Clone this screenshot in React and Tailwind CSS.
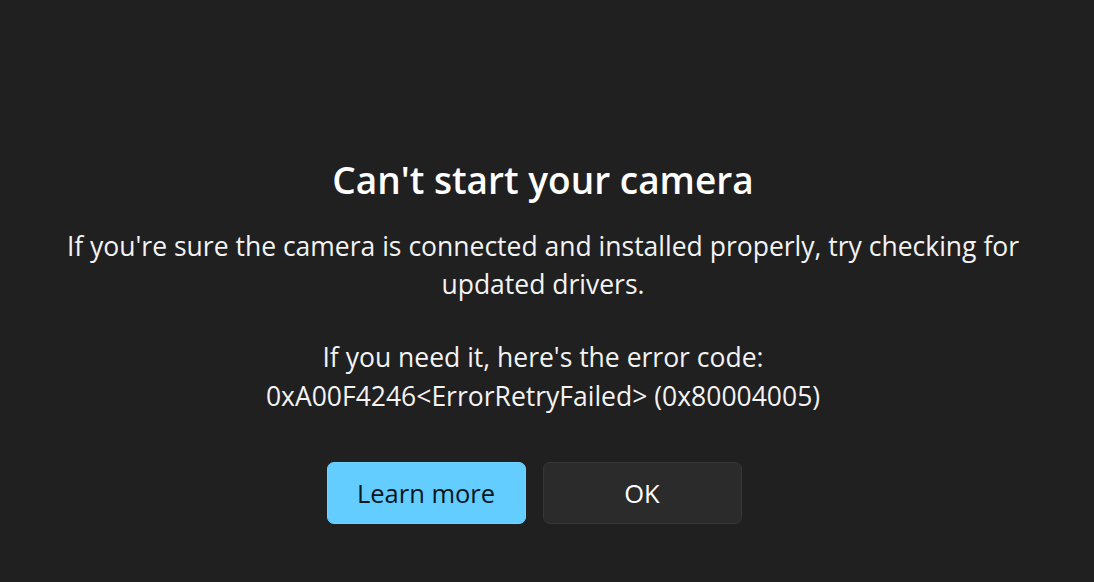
export default function App() {
  return (
    <div
      className="w-[1094px] h-[582px] bg-[#202020] text-white flex flex-col items-center overflow-hidden pr-[8px]"
      style={{ fontFamily: '"Segoe UI", "Open Sans", "Noto Sans", sans-serif' }}
    >
      <h1 className="mt-[156px] text-[37px] leading-[48px] font-semibold text-white whitespace-nowrap">
        Can't start your camera
      </h1>
      <p className="mt-[23px] text-[26.5px] leading-[38px] text-center text-[#f3f3f3] whitespace-nowrap">
        If you're sure the camera is connected and installed properly, try checking for
        <br />
        updated drivers.
      </p>
      <p className="mt-[35px] text-[26.5px] leading-[39px] text-center text-[#f3f3f3] whitespace-nowrap">
        If you need it, here's the error code:
        <br />
        0xA00F4246&lt;ErrorRetryFailed&gt; (0x80004005)
      </p>
      <div className="mt-[46px] mr-[18px] flex gap-[17px]">
        <button className="w-[199px] h-[62px] rounded-[7px] bg-[#62cdfe] text-[#08161f] text-[25.5px] border border-[#70d3ff]">
          Learn more
        </button>
        <button className="w-[199px] h-[62px] rounded-[7px] bg-[#2b2b2b] text-white text-[25.5px] border border-[#363636]">
          OK
        </button>
      </div>
    </div>
  );
}
